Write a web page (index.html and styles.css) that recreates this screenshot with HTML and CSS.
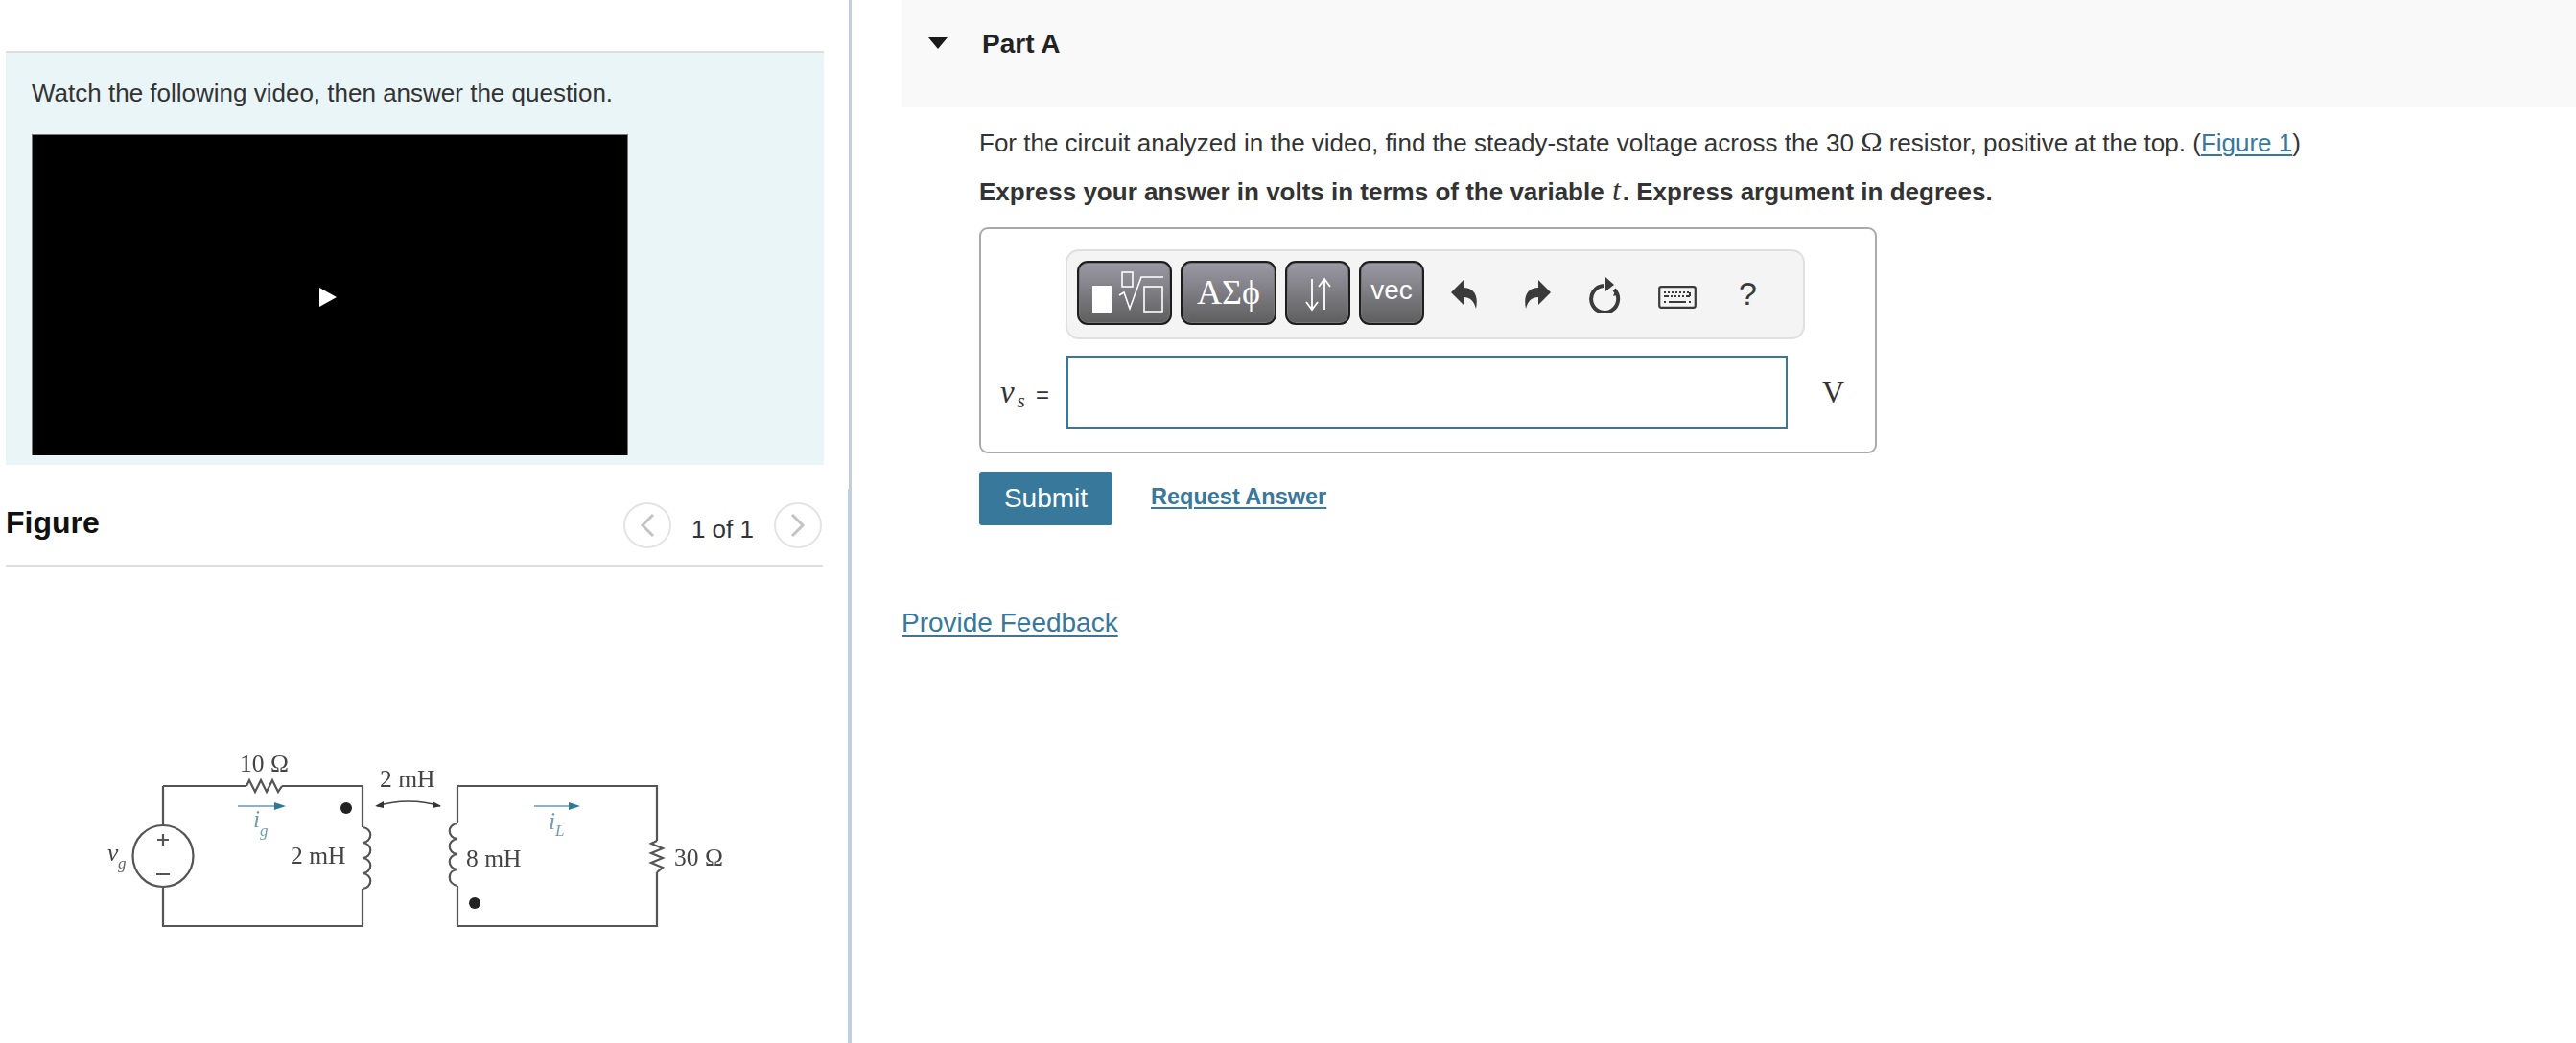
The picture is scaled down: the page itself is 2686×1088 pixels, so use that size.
FILE: index.html
```html
<!DOCTYPE html>
<html lang="en">
<head>
<meta charset="utf-8">
<title>Part A</title>
<link rel="stylesheet" href="styles.css">
</head>
<body>
<div class="app">
  <aside class="left">
    <section class="left-top">
      <div class="intro">
        <p class="intro-text">Watch the following video, then answer the question.</p>
        <div class="video"><span class="play"></span></div>
      </div>
    </section>
    <section class="left-bottom">
      <header class="fig-head">
        <h2 class="fig-title">Figure</h2>
        <div class="pager">
          <span class="circle"><svg width="18" height="26" viewBox="0 0 18 26"><path d="M15 2 4 13l11 11" class="chev"/></svg></span>
          <span class="count">1 of 1</span>
          <span class="circle"><svg width="18" height="26" viewBox="0 0 18 26"><path d="M3 2l11 11L3 24" class="chev"/></svg></span>
        </div>
      </header>
      <svg class="circuit" width="720" height="220" viewBox="0 0 720 220">
        <g class="wire">
          <path d="M110 60 H197 M234 60 H318 V103 M318 167 V206 H110 V165 M110 101 V60"/>
          <path d="M197 60 l3 -6 l6 12 l6 -12 l6 12 l6 -12 l6 12 l4 -6"/>
          <path d="M318 103 c11 1 11 15 0 16 c11 1 11 15 0 16 c11 1 11 15 0 16 c11 1 11 15 0 16"/>
          <path d="M417 60 H625 V117 M625 150 V206 H417 V164 M417 99 V60"/>
          <path d="M417 99 c-11 1 -11 15 0 16 c-11 1 -11 15 0 16 c-11 1 -11 15 0 16 c-11 1 -11 15 0 17"/>
          <path d="M625 117 l-6 3 l12 5 l-12 5 l12 5 l-12 5 l12 5 l-6 5"/>
          <ellipse cx="110" cy="133" rx="31.5" ry="32"/>
          <path d="M110 110 v12 M104 116 h12 M103 152 h14"/>
          <path class="thin" d="M333 81 q33 -10 66 0"/>
        </g>
        <path class="head" d="M331 81l9-5 0 7zM400 81l-9-5 0 7z"/>
        <circle class="dot" cx="301" cy="83" r="6"/>
        <circle class="dot" cx="435" cy="182" r="6"/>
        <g class="arrow">
          <path d="M188 81 H228"/><path d="M497 81 H535"/>
        </g>
        <path class="arrow-head" d="M226 77l12 4-12 4zM533 77l12 4-12 4z"/>
        <text class="lbl" x="190" y="45">10 Ω</text>
        <text class="lbl" x="336" y="61">2 mH</text>
        <text class="lbl" x="243" y="141">2 mH</text>
        <text class="lbl" x="426" y="144">8 mH</text>
        <text class="lbl" x="643" y="143">30 Ω</text>
        <text class="lbl it" x="52" y="138">v</text><text class="sub it" x="63" y="146">g</text>
        <text class="lbl it blue" x="204" y="103">i</text><text class="sub it blue" x="211" y="112">g</text>
        <text class="lbl it blue" x="512" y="105">i</text><text class="sub it blue" x="519" y="112">L</text>
      </svg>
    </section>
  </aside>
  <main class="right">
    <header class="part-head">
      <span class="caret"></span>
      <h1 class="part-title">Part A</h1>
    </header>
    <div class="part-body">
      <p class="q">For the circuit analyzed in the video, find the steady-state voltage across the 30 <span class="math">Ω</span> resistor, positive at the top. (<a class="link" href="#">Figure 1</a>)</p>
      <p class="q strong">Express your answer in volts in terms of the variable <span class="math it">t</span>. Express argument in degrees.</p>
      <div class="answer">
        <div class="toolbar">
          <span class="tbtn w99"><svg width="95" height="63" viewBox="0 0 95 63"><rect x="14" y="24" width="20" height="28" fill="#fff"/><g fill="none" stroke="#fff" stroke-width="1.6"><rect x="45" y="10" width="11" height="15"/><rect x="68" y="25" width="19" height="26"/><path d="M42 34l5-3 6 17 12-33h23"/></g></svg></span>
          <span class="tbtn w100 greek">ΑΣϕ</span>
          <span class="tbtn w68"><svg width="64" height="63" viewBox="0 0 64 63"><g fill="none" stroke="#fff" stroke-width="1.8"><path d="M26 17v31M20 41l6 8 6-8"/><path d="M39 49V18M33 25l6-8 6 8"/></g></svg></span>
          <span class="tbtn w68 vec">vec</span>
          <span class="tools">
            <svg class="tool" width="28" height="32" viewBox="0 0 28 32"><path d="M0 14 13 1v8c10 0 16 7 13 22-2-8-6-12-13-12v8z"/></svg>
            <svg class="tool" width="28" height="32" viewBox="0 0 28 32"><path d="M28 14 15 1v8C5 9-1 16 2 31c2-8 6-12 13-12v8z"/></svg>
            <svg class="tool" width="36" height="38" viewBox="0 0 36 38"><path d="M15 9a14 14 0 1 0 11 4" fill="none" stroke="#3a3a3a" stroke-width="4"/><path d="M17 0l9 8-9 7zM25 20l3-8 3 6z"/></svg>
            <svg class="tool kbd" width="40" height="24" viewBox="0 0 40 24"><rect x="1.2" y="1.2" width="37.6" height="21.6" rx="2" fill="none" stroke="#3a3a3a" stroke-width="2.2"/><path class="keys" d="M6 7h2M10 7h2M14 7h2M18 7h2M22 7h2M26 7h2M30 7h2M6 11h5M13 11h2M17 11h2M21 11h2M25 11h2M29 11h4M33 7v4M6 17h2M11 17h18M32 17h2"/></svg>
            <span class="qm">?</span>
          </span>
        </div>
        <div class="row">
          <span class="lhs"><i class="math-v">v</i><i class="math-s">s</i> <span class="eq">=</span></span>
          <div class="input"></div>
          <span class="unit">V</span>
        </div>
      </div>
      <div class="actions">
        <button class="submit" type="button">Submit</button>
        <a class="link request" href="#">Request Answer</a>
      </div>
    </div>
    <a class="link feedback" href="#">Provide Feedback</a>
  </main>
</div>
</body>
</html>
```
FILE: styles.css
```css
* { box-sizing: border-box; }
html, body { margin: 0; padding: 0; background: #fff; }
body { font-family: "Liberation Sans", Arial, sans-serif; color: #333; font-size: 26px; }
.app { display: flex; height: 1088px; overflow: hidden; }

.left { width: 888px; flex: none; display: flex; flex-direction: column; }
.left-top { height: 510px; padding: 53px 26px 0 6px; border-right: 3px solid #c0cfe0; }
.intro { height: 432px; background: #e9f5f7; border-top: 2px solid #ddd; padding: 24px 0 0 27px; }
.intro-text { margin: 0; font-size: 26px; line-height: 36px; color: #333; }
.video { width: 622px; height: 335px; margin: 25px 0 0 0; background: #000; border: 1px solid #777; border-bottom: 0; display: flex; align-items: center; justify-content: center; }
.play { width: 0; height: 0; border-left: 18px solid #fff; border-top: 10px solid transparent; border-bottom: 10px solid transparent; margin: 3px 0 0 -4px; }

.left-bottom { flex: 1; border-right: 4px solid #c0cfe0; padding: 0 26px 0 6px; display: flex; flex-direction: column; }
.fig-head { height: 81px; border-bottom: 2px solid #ddd; display: flex; justify-content: space-between; padding-top: 14px; }
.fig-title { margin: 0; font-size: 32px; line-height: 42px; color: #111; font-weight: 700; }
.pager { display: flex; align-items: center; height: 48px; gap: 21px; margin-right: 1px; }
.circle { width: 50px; height: 48px; border: 2px solid #e4e4e4; border-radius: 50%; display: flex; align-items: center; justify-content: center; }
.chev { fill: none; stroke: #c4c4c4; stroke-width: 3; }
.count { font-size: 26px; color: #333; padding-top: 9px; }
.circuit { display: block; margin: 169px 0 0 54px; filter: blur(.5px); }
.wire path, .wire ellipse { fill: none; stroke: #555; stroke-width: 2.2; }
.wire .thin { stroke-width: 1.6; stroke: #444; }
.head { fill: #333; }
.dot { fill: #222; }
.arrow path { fill: none; stroke: #8fb1c2; stroke-width: 2; }
.arrow-head { fill: #2f7896; }
.lbl { font-family: "Liberation Serif", serif; font-size: 25.5px; fill: #444; }
.sub { font-family: "Liberation Serif", serif; font-size: 17px; fill: #666; }
.it { font-style: italic; }
.blue { fill: #6f9db3; }

.right { flex: 1; min-width: 0; padding-left: 52px; }
.part-head { height: 112px; background: #f9f9f9; display: flex; align-items: flex-start; padding-left: 28px; }
.caret { width: 0; height: 0; margin-top: 39px; border-top: 12px solid #1a1a1a; border-left: 10px solid transparent; border-right: 10px solid transparent; }
.part-title { margin: 27px 0 0 36px; font-size: 28px; line-height: 38px; color: #222; font-weight: 700; }
.part-body { padding: 19px 0 0 81px; }
.q { margin: 0; font-size: 26px; line-height: 36px; color: #333; }
.strong { font-weight: 700; margin-top: 15px; }
.math { font-family: "Liberation Serif", serif; font-size: 30px; line-height: 30px; }
.math.it { font-style: italic; font-weight: 400; font-size: 32px; padding: 0 2px 0 1px; }
.link { color: #38789b; text-decoration: underline; text-decoration-thickness: 2px; text-underline-offset: 3px; }

.answer { width: 936px; height: 236px; margin-top: 19px; border: 2px solid #aaa; border-radius: 9px; padding: 21px 0 0 88px; }
.toolbar { width: 771px; height: 94px; background: #f4f4f4; border: 2px solid #e0e0e0; border-radius: 14px; display: flex; align-items: flex-start; padding: 10px 0 0 10px; gap: 9px; }
.tbtn { height: 67px; flex: none; display: flex; align-items: center; justify-content: center; color: #fff; border: 2px solid #1d1d1d; border-radius: 11px; background: linear-gradient(#9b9aa5, #5e5e5e); box-shadow: inset 0 0 0 1px #777; }
.w99 { width: 99px; }
.w100 { width: 100px; }
.w68 { width: 68px; }
.greek { font-family: "Liberation Serif", serif; font-size: 36px; padding-bottom: 2px; }
.vec { font-size: 28px; padding-bottom: 6px; }
.tools { display: flex; align-items: flex-start; flex: 1; height: 70px; }
.tool { fill: #3a3a3a; flex: none; }
.tools .tool:nth-child(1) { margin: 19px 0 0 19px; }
.tools .tool:nth-child(2) { margin: 19px 0 0 48px; }
.tools .tool:nth-child(3) { margin: 17px 0 0 40px; }
.tools .tool:nth-child(4) { margin: 26px 0 0 36px; }
.keys { fill: none; stroke: #3a3a3a; stroke-width: 2; }
.qm { font-size: 34px; line-height: 40px; margin: 14px 0 0 44px; color: #3a3a3a; }

.row { display: flex; align-items: center; margin: 17px 0 0 -88px; }
.lhs { width: 89px; text-align: right; padding-right: 18px; font-family: "Liberation Serif", serif; font-size: 25px; color: #333; white-space: nowrap; }
.math-v { font-size: 33px; }
.math-s { font-size: 21px; position: relative; top: 5px; margin-left: 3px; margin-right: 5px; }
.eq { font-family: "Liberation Sans", sans-serif; font-size: 24px; }
.input { width: 752px; height: 76px; background: #fff; border: 2px solid #38789b; }
.unit { margin-left: 36px; font-family: "Liberation Serif", serif; font-size: 32px; color: #333; }

.actions { display: flex; align-items: center; margin-top: 19px; }
.submit { width: 139px; height: 56px; background: #38789b; border: 0; border-radius: 3px; color: #fff; font: 28px "Liberation Sans", sans-serif; padding: 0; }
.request { margin-left: 40px; font-size: 23.5px; font-weight: 700; position: relative; top: -2px; }
.feedback { display: inline-block; margin-top: 84px; font-size: 28px; line-height: 36px; }
```
